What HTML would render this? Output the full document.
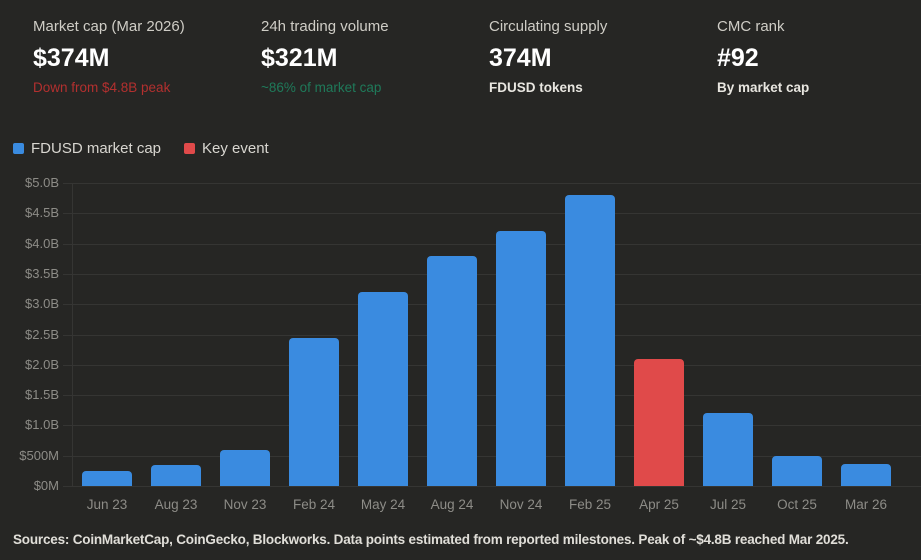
<!DOCTYPE html><html><head><style>
body{margin:0;width:921px;height:560px;background:#262624;font-family:"Liberation Sans",sans-serif;position:relative;overflow:hidden}
.a{position:absolute;white-space:nowrap}
.l{font-size:15px;color:#cfcdc6;top:18px}
.v{font-size:25px;font-weight:bold;color:#fff;top:44px}
.s{font-size:13.5px;top:80px}
.g{position:absolute;left:63px;width:858px;height:1px;background:#353533}
.y{position:absolute;right:862px;font-size:13px;color:#8d8c87;text-align:right}
.b{position:absolute;width:50px;background:#3a8be0;border-radius:4px 4px 0 0}
.x{position:absolute;width:80px;text-align:center;font-size:13.5px;color:#8d8c87;top:497px}
</style></head><body>
<div class="a l" style="left:33px">Market cap (Mar 2026)</div>
<div class="a v" style="left:33px">$374M</div>
<div class="a s" style="left:33px;color:#b3302f">Down from $4.8B peak</div>
<div class="a l" style="left:261px">24h trading volume</div>
<div class="a v" style="left:261px">$321M</div>
<div class="a s" style="left:261px;color:#1f7a5a">~86% of market cap</div>
<div class="a l" style="left:489px">Circulating supply</div>
<div class="a v" style="left:489px">374M</div>
<div class="a s" style="left:489px;color:#e8e6e0;font-weight:bold">FDUSD tokens</div>
<div class="a l" style="left:717px">CMC rank</div>
<div class="a v" style="left:717px">#92</div>
<div class="a s" style="left:717px;color:#e8e6e0;font-weight:bold">By market cap</div>
<div class="a" style="left:13px;top:143px;width:11px;height:11px;background:#3a8be0;border-radius:2px"></div>
<div class="a" style="left:31px;top:140px;font-size:15px;color:#d8d6d0">FDUSD market cap</div>
<div class="a" style="left:184px;top:143px;width:11px;height:11px;background:#e04a4a;border-radius:2px"></div>
<div class="a" style="left:202px;top:140px;font-size:15px;color:#d8d6d0">Key event</div>
<div class="a" style="left:72px;top:183px;width:1px;height:304px;background:#353533"></div>
<div id="c"></div>
<div class="a" style="left:13px;top:532px;font-size:13.5px;color:#e0ded8;font-weight:bold;letter-spacing:-0.2px">Sources: CoinMarketCap, CoinGecko, Blockworks. Data points estimated from reported milestones. Peak of ~$4.8B reached Mar 2025.</div>
<script>
var h='',yl=['$0M','$500M','$1.0B','$1.5B','$2.0B','$2.5B','$3.0B','$3.5B','$4.0B','$4.5B','$5.0B'];
for(var i=0;i<=10;i++){var y=486-i*30.3;h+='<div class="g" style="top:'+y+'px"></div><div class="y" style="top:'+(y-8)+'px">'+yl[i]+'</div>';}
var v=[.25,.35,.6,2.45,3.2,3.8,4.2,4.8,2.1,1.2,.5,.37],n=['Jun 23','Aug 23','Nov 23','Feb 24','May 24','Aug 24','Nov 24','Feb 25','Apr 25','Jul 25','Oct 25','Mar 26'];
for(var i=0;i<12;i++){var c=107+i*69,hh=v[i]*60.6;h+='<div class="b" style="left:'+(c-25)+'px;top:'+(486-hh)+'px;height:'+hh+'px;'+(i==8?'background:#e04a4a':'')+'"></div><div class="x" style="left:'+(c-40)+'px">'+n[i]+'</div>';}
document.getElementById('c').innerHTML=h;
</script>
</body></html>
